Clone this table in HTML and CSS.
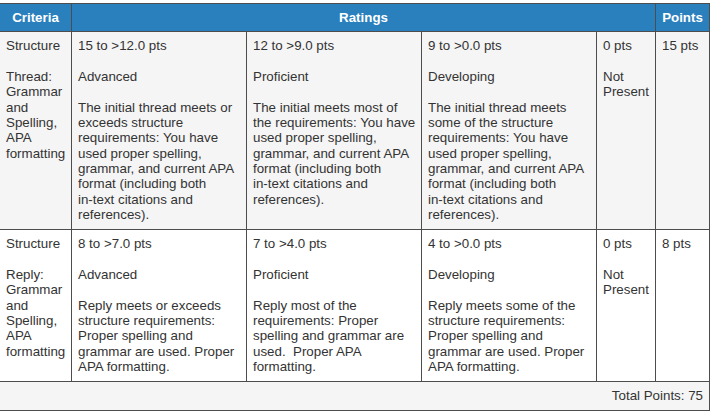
FILE: index.html
```html
<!DOCTYPE html>
<html>
<head>
<meta charset="utf-8">
<link rel="stylesheet" href="styles.css">
</head>
<body>
<div class="wrap">
<table class="rubric">
  <colgroup>
    <col class="c-crit">
    <col class="c-rate">
    <col class="c-rate">
    <col class="c-rate">
    <col class="c-zero">
    <col class="c-pts">
  </colgroup>
  <thead>
    <tr>
      <th>Criteria</th>
      <th colspan="4">Ratings</th>
      <th>Points</th>
    </tr>
  </thead>
  <tbody>
    <tr class="shade">
      <td><div class="blk">Structure</div><div>Thread: Grammar and Spelling, APA formatting</div></td>
      <td><div class="blk">15 to &gt;12.0 pts</div><div class="blk">Advanced</div><div>The initial thread meets or exceeds structure requirements: You have used proper spelling, grammar, and current APA format (including both in-&#8288;text citations and references).</div></td>
      <td><div class="blk">12 to &gt;9.0 pts</div><div class="blk">Proficient</div><div>The initial meets most of the requirements: You have used proper spelling, grammar, and current APA format (including both in-&#8288;text citations and references).</div></td>
      <td><div class="blk">9 to &gt;0.0 pts</div><div class="blk">Developing</div><div>The initial thread meets some of the structure requirements: You have used proper spelling, grammar, and current APA format (including both in-&#8288;text citations and references).</div></td>
      <td><div class="blk">0 pts</div><div>Not Present</div></td>
      <td>15 pts</td>
    </tr>
    <tr>
      <td><div class="blk">Structure</div><div>Reply: Grammar and Spelling, APA formatting</div></td>
      <td><div class="blk">8 to &gt;7.0 pts</div><div class="blk">Advanced</div><div>Reply meets or exceeds structure requirements: Proper spelling and grammar are used. Proper APA formatting.</div></td>
      <td><div class="blk">7 to &gt;4.0 pts</div><div class="blk">Proficient</div><div>Reply most of the requirements: Proper spelling and grammar are used.&nbsp; Proper APA formatting.</div></td>
      <td><div class="blk">4 to &gt;0.0 pts</div><div class="blk">Developing</div><div>Reply meets some of the structure requirements: Proper spelling and grammar are used. Proper APA formatting.</div></td>
      <td><div class="blk">0 pts</div><div>Not Present</div></td>
      <td>8 pts</td>
    </tr>
    <tr class="shade foot">
      <td colspan="6">Total Points: 75</td>
    </tr>
  </tbody>
</table>
</div>
</body>
</html>
```

FILE: styles.css
```css
html, body {
  margin: 0;
  padding: 0;
  background: #ffffff;
}
.wrap {
  padding-top: 3px;
  margin-left: -1px;
}
.rubric {
  border-collapse: collapse;
  table-layout: fixed;
  width: 711px;
  font-family: "Liberation Sans", Arial, sans-serif;
  font-size: 13.333px;
  line-height: 15.33px;
  color: #333333;
}
.c-crit { width: 72px; }
.c-rate { width: 175px; }
.c-zero { width: 59px; }
.c-pts { width: 54px; }
.rubric th,
.rubric td {
  border: 1px solid #4d4d4d;
  vertical-align: top;
  text-align: left;
}
.rubric th {
  background: #2a80bd;
  color: #ffffff;
  font-weight: bold;
  text-align: center;
  padding: 6px 5px 6px;
}
.rubric td {
  padding: 6px 4px 7px 6px;
}
.shade td {
  background: #f5f5f5;
}
.blk {
  margin-bottom: 15.33px;
}
.foot td {
  text-align: right;
  padding: 6px 6px 6px;
}
```
